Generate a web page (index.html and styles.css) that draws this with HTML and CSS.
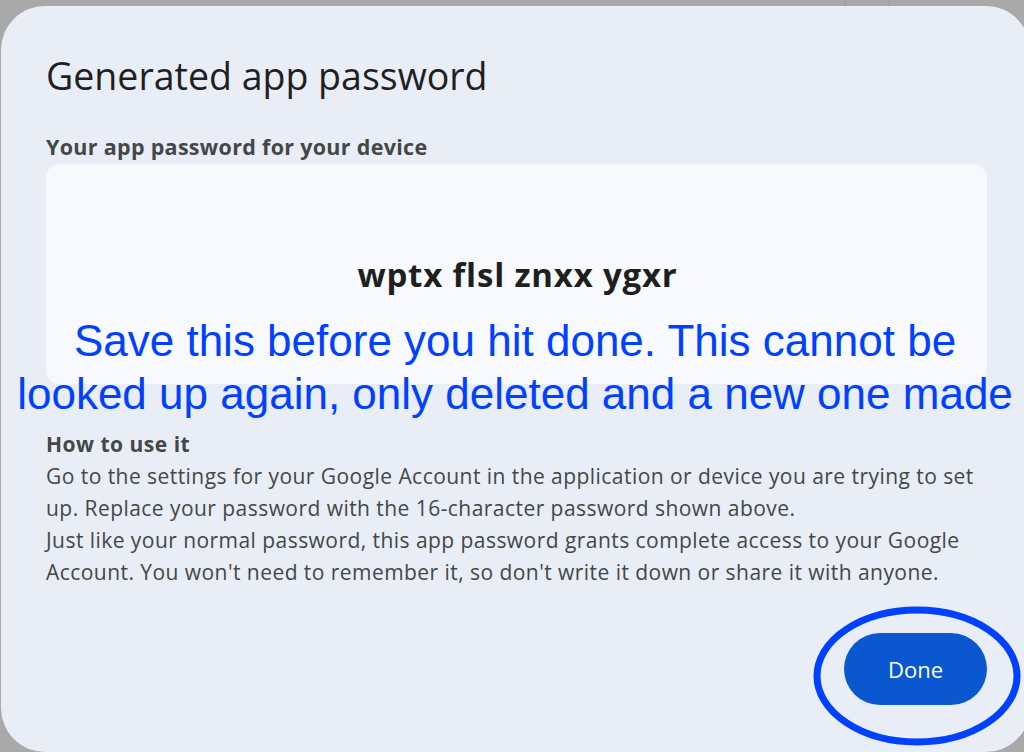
FILE: index.html
```html
<!DOCTYPE html>
<html>
<head>
<meta charset="utf-8">
<link rel="stylesheet" href="styles.css">
</head>
<body>
<div class="backdrop">
  <span class="seam seam-a"></span>
  <span class="seam seam-b"></span>
</div>
<div class="dialog">
  <h1 class="title">Generated app password</h1>
  <div class="label">Your app password for your device</div>
  <div class="card">
    <div class="password">wptx flsl znxx ygxr</div>
  </div>
  <div class="howto">
    <div class="howto-title">How to use it</div>
    <p class="howto-text">Go to the settings for your Google Account in the application or device you are trying to set up. Replace your password with the 16-character password shown above.</p>
    <p class="howto-text">Just like your normal password, this app password grants complete access to your Google Account. You won't need to remember it, so don't write it down or share it with anyone.</p>
  </div>
  <div class="actions">
    <button class="done">Done</button>
  </div>
  <div class="note">Save this before you hit done. This cannot be<br>looked up again, only deleted and a new one made</div>
  <svg class="circle" width="220" height="150" viewBox="0 0 220 150">
    <ellipse cx="110" cy="75" rx="100" ry="66" fill="none" stroke="#0040ff" stroke-width="7"/>
  </svg>
</div>
</body>
</html>
```
FILE: styles.css
```css
html, body {
  margin: 0;
  padding: 0;
  width: 1024px;
  height: 752px;
  overflow: hidden;
  background: #a9a9a9;
}
.backdrop {
  position: absolute;
  inset: 0;
}
.seam {
  position: absolute;
  top: 0;
  width: 1px;
  height: 6px;
  background: #9c9c9c;
}
.seam-a { left: 845px; }
.seam-b { left: 889px; }
.dialog {
  position: relative;
  box-sizing: border-box;
  margin: 6px 0 0 1px;
  width: 1029px;
  height: 746px;
  border-radius: 44px;
  background: #e8edf6;
  padding: 50px 43px 0 45px;
  font-family: "Open Sans", "Noto Sans", sans-serif;
  color: #444746;
}
.title {
  margin: 0;
  font-size: 37.5px;
  line-height: 40px;
  font-weight: 400;
  color: #1f1f1f;
}
.label {
  margin-top: 39px;
  font-size: 21.5px;
  line-height: 24px;
  font-weight: 700;
  letter-spacing: 0.3px;
  color: #444746;
}
.card {
  margin-top: 5px;
  width: 941px;
  height: 220px;
  border-radius: 14px;
  background: #f7f9fd;
  display: flex;
  align-items: center;
  justify-content: center;
}
.password {
  font-size: 33px;
  font-weight: 700;
  letter-spacing: 0.8px;
  color: #1f1f1f;
  padding-left: 2px;
}
.howto {
  margin-top: 44px;
  width: 950px;
}
.howto-title {
  font-size: 21px;
  line-height: 32px;
  font-weight: 700;
  letter-spacing: 0.5px;
}
.howto-text {
  margin: 0;
  font-size: 21px;
  line-height: 32px;
  letter-spacing: 0.45px;
}
.actions {
  margin-top: 45px;
  width: 941px;
  display: flex;
  justify-content: flex-end;
}
.done {
  width: 143px;
  height: 72px;
  border: 0;
  border-radius: 36px;
  background: #0b57d0;
  color: #fff;
  font-family: "Open Sans", "Noto Sans", sans-serif;
  font-size: 22px;
  font-weight: 500;
  padding: 0;
}
.note {
  position: absolute;
  left: -1px;
  top: 308px;
  width: 1030px;
  text-align: center;
  font-family: "Liberation Sans", Arial, sans-serif;
  font-size: 44px;
  line-height: 53px;
  color: #0040ff;
}
.circle {
  position: absolute;
  left: 806px;
  top: 595px;
}
```
